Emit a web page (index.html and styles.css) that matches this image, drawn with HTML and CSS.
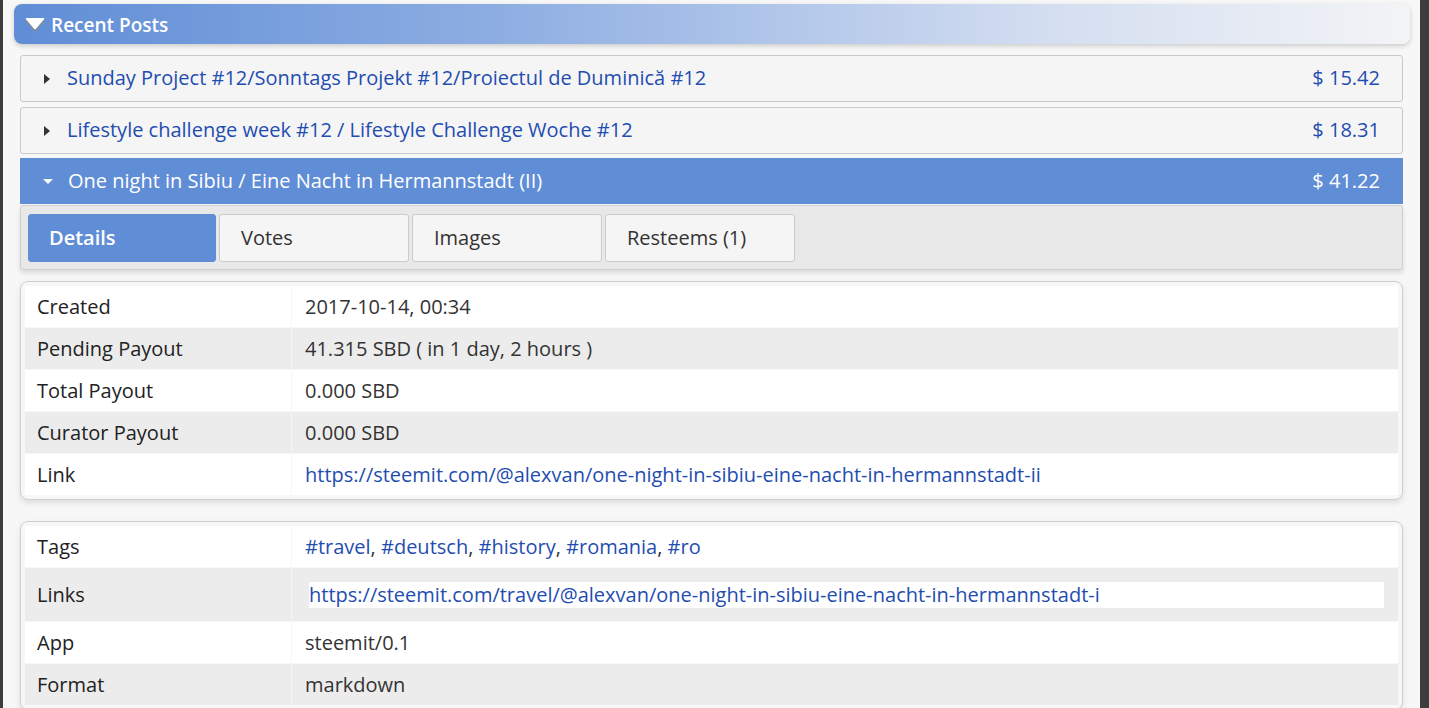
FILE: index.html
```html
<!DOCTYPE html>
<html lang="en">
<head>
  <meta charset="UTF-8">
  <meta name="viewport" content="width=device-width, initial-scale=1.0">
  <title>Recent Posts</title>
  <link rel="stylesheet" href="styles.css">
</head>
<body>
  <div class="page">
    <div class="section-head">
      <svg class="head-arrow" width="22" height="16" viewBox="0 0 22 16">
        <path d="M2.5 3 L19.5 3 Q21 3 20 4.3 L12 13.5 Q11 14.6 10 13.5 L2 4.3 Q1 3 2.5 3 Z" fill="#8a8a8a"/>
        <path d="M2.5 1 L19.5 1 Q21 1 20 2.3 L12 11.8 Q11 12.9 10 11.8 L2 2.3 Q1 1 2.5 1 Z" fill="#ffffff"/>
      </svg>
      <span>Recent Posts</span>
    </div>

    <div class="posts">
      <div class="post">
        <span class="caret right"></span>
        <span class="post-title">Sunday Project #12/Sonntags Projekt #12/Proiectul de Duminică #12</span>
        <span class="post-price">$ 15.42</span>
      </div>
      <div class="post second">
        <span class="caret right"></span>
        <span class="post-title">Lifestyle challenge week #12 / Lifestyle Challenge Woche #12</span>
        <span class="post-price">$ 18.31</span>
      </div>
      <div class="post active">
        <span class="caret down"></span>
        <span class="post-title">One night in Sibiu / Eine Nacht in Hermannstadt (II)</span>
        <span class="post-price">$ 41.22</span>
      </div>

      <div class="tabs">
        <div class="tab selected">Details</div>
        <div class="tab">Votes</div>
        <div class="tab">Images</div>
        <div class="tab">Resteems (1)</div>
      </div>

      <div class="box">
        <table class="info">
          <tr><td class="key">Created</td><td>2017-10-14, 00:34</td></tr>
          <tr><td class="key">Pending Payout</td><td>41.315 SBD ( in 1 day, 2 hours )</td></tr>
          <tr><td class="key">Total Payout</td><td>0.000 SBD</td></tr>
          <tr><td class="key">Curator Payout</td><td>0.000 SBD</td></tr>
          <tr><td class="key">Link</td><td><a href="#">https://steemit.com/@alexvan/one-night-in-sibiu-eine-nacht-in-hermannstadt-ii</a></td></tr>
        </table>
      </div>

      <div class="box">
        <table class="info">
          <tr><td class="key">Tags</td><td><a href="#">#travel</a>, <a href="#">#deutsch</a>, <a href="#">#history</a>, <a href="#">#romania</a>, <a href="#">#ro</a></td></tr>
          <tr class="tall"><td class="key">Links</td><td><div class="link-list"><a href="#">https://steemit.com/travel/@alexvan/one-night-in-sibiu-eine-nacht-in-hermannstadt-i</a></div></td></tr>
          <tr><td class="key">App</td><td>steemit/0.1</td></tr>
          <tr><td class="key">Format</td><td>markdown</td></tr>
        </table>
      </div>
    </div>
  </div>
</body>
</html>
```

FILE: styles.css
```css
html, body {
  margin: 0;
  padding: 0;
  height: 100%;
  overflow: hidden;
}
body {
  background: #3d3d3d;
  font-family: "Open Sans", "Noto Sans", sans-serif;
  color: #333;
}
a {
  color: #1f4db0;
  text-decoration: none;
}
.page {
  margin-left: 3px;
  width: 1417px;
  min-height: 708px;
  background: #f7f7f7;
  padding-top: 4px;
  box-sizing: border-box;
}
.section-head {
  margin-left: 11px;
  width: 1396px;
  height: 40px;
  box-sizing: border-box;
  border-radius: 8px;
  background: linear-gradient(to right, #5f8dd6 0%, #8eaee2 35%, #d5dff1 75%, #f3f4f6 100%);
  box-shadow: 0 2px 5px rgba(0, 0, 0, 0.18);
  display: flex;
  align-items: center;
  padding-left: 10px;
  padding-top: 1px;
  color: #fff;
  font-weight: 600;
  font-size: 19px;
}
.head-arrow {
  margin-right: 5px;
  margin-top: 1px;
}
.posts {
  margin: 11px 0 0 17px;
  width: 1383px;
}
.post {
  height: 47px;
  box-sizing: border-box;
  border: 1px solid #cacaca;
  border-radius: 3px;
  background: #f5f5f5;
  display: flex;
  align-items: center;
  padding: 0 22px 0 22px;
  margin-bottom: 5px;
  font-size: 20px;
  color: #1f4db0;
}
.post.second {
  margin-bottom: 4px;
}
.post.active {
  background: #5f8dd6;
  border-color: #5f8dd6;
  color: #fff;
  border-radius: 0;
  height: 46px;
  margin-bottom: 1px;
}
.caret {
  width: 0;
  height: 0;
  margin-right: 17px;
}
.caret.right {
  border-top: 5px solid transparent;
  border-bottom: 5px solid transparent;
  border-left: 6px solid #333;
  margin-left: 1px;
}
.caret.down {
  border-left: 5px solid transparent;
  border-right: 5px solid transparent;
  border-top: 5px solid #fff;
  margin-right: 15px;
}
.post-title {
  flex: 1;
  padding-bottom: 2px;
}
.post-price {
  padding-bottom: 2px;
}
.tabs {
  background: #e8e8e8;
  border: 1px solid #d0d0d0;
  border-radius: 3px;
  box-shadow: 0 3px 5px rgba(0, 0, 0, 0.12);
  height: 65px;
  box-sizing: border-box;
  display: flex;
  gap: 3px;
  padding: 8px 7px;
  margin-bottom: 11px;
}
.tab {
  width: 190px;
  height: 48px;
  box-sizing: border-box;
  border: 1px solid #cbcbcb;
  border-radius: 3px;
  background: #f5f5f5;
  font-size: 20px;
  padding-left: 21px;
  padding-bottom: 2px;
  display: flex;
  align-items: center;
  color: #333;
}
.tab.selected {
  background: #5f8dd6;
  border-color: #5f8dd6;
  color: #fff;
  font-weight: 600;
  padding-left: 20px;
  width: 188px;
}
.box {
  border: 1px solid #cfcfcf;
  border-radius: 8px;
  background: #f7f7f7;
  box-shadow: 0 3px 6px rgba(0, 0, 0, 0.1);
  padding: 4px 4px;
  margin-bottom: 21px;
}
.info {
  border-collapse: separate;
  border-spacing: 1px 1px;
  margin: -1px;
  width: calc(100% + 2px);
  font-size: 20px;
}
.info td {
  height: 41px;
  line-height: 24px;
  padding: 1px 0 0 13px;
  box-sizing: border-box;
  background: #fff;
}
.info tr:nth-child(even) td {
  background: #ececec;
}
.info td.key {
  width: 266px;
  padding-left: 12px;
  color: #222;
}
.info tr.tall td {
  height: 53px;
}
.link-list {
  background: #fff;
  margin: 0 14px 0 4px;
  height: 26px;
  line-height: 26px;
}
```
